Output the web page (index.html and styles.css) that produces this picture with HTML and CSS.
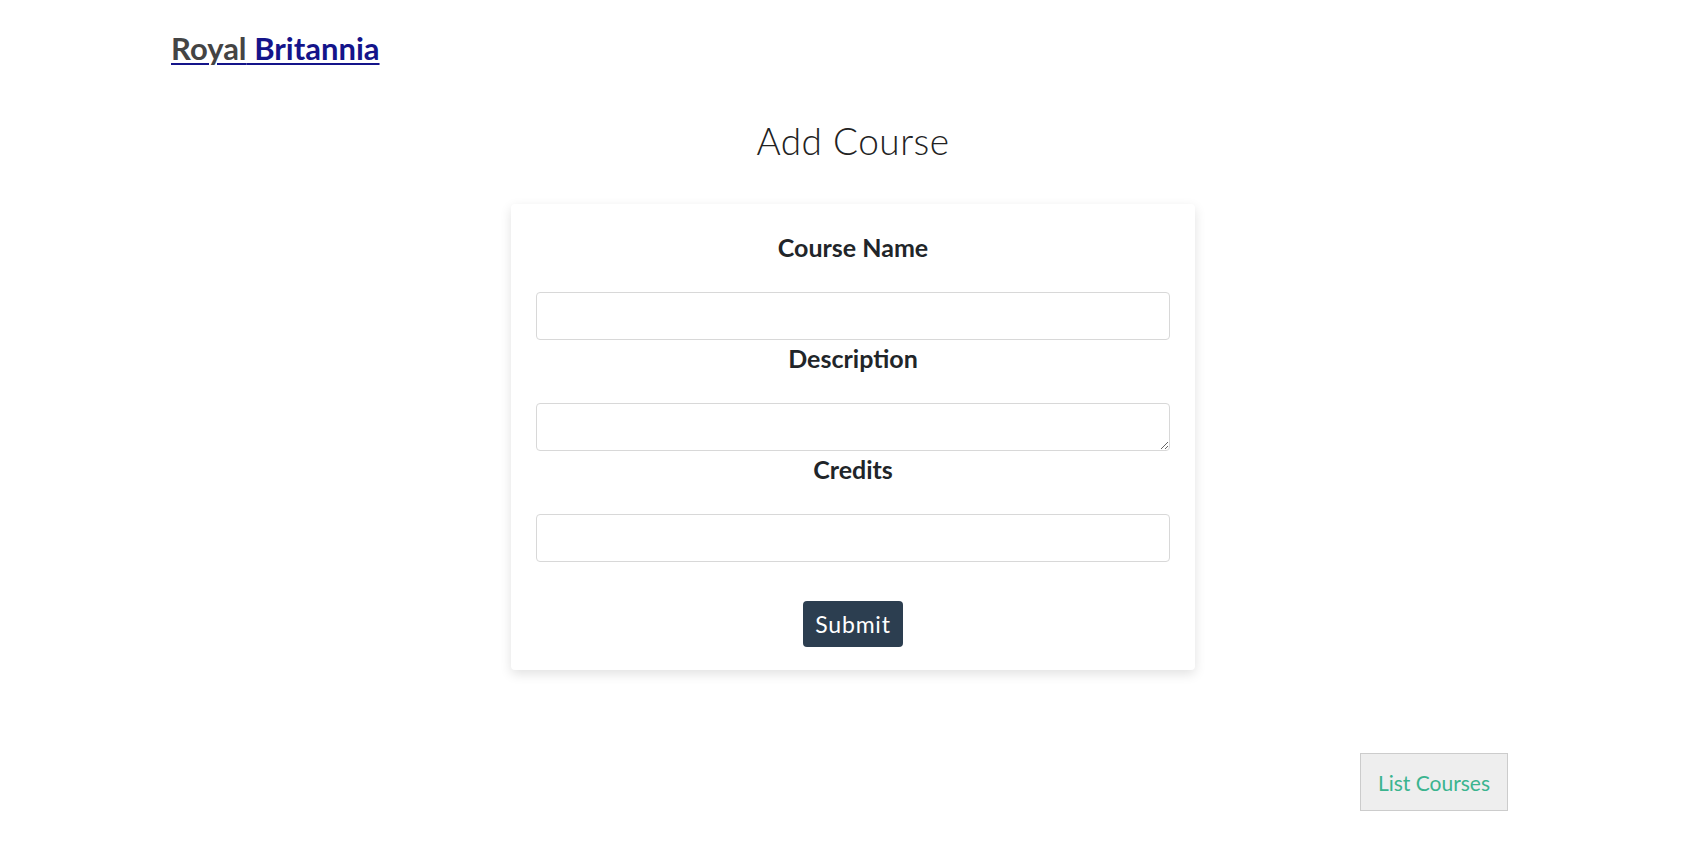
FILE: index.html
```html
<!DOCTYPE html>
<html>
<head>
<meta charset="utf-8">
<title>Add Course</title>
<link rel="stylesheet" href="styles.css">
</head>
<body>
<header class="site-header">
  <a class="brand" href="#"><span class="brand-royal">Royal</span> Britannia</a>
</header>
<main class="page">
  <h1 class="page-title">Add Course</h1>
  <form class="card">
    <label class="field-label" for="name">Course Name</label>
    <input class="field-input" id="name" type="text">
    <label class="field-label" for="desc">Description</label>
    <textarea class="field-input field-textarea" id="desc"></textarea>
    <label class="field-label" for="credits">Credits</label>
    <input class="field-input" id="credits" type="text">
    <div class="actions">
      <button class="btn-submit" type="button">Submit</button>
    </div>
  </form>
  <div class="footer-actions">
    <a class="btn-list" href="#">List Courses</a>
  </div>
</main>
</body>
</html>
```
FILE: styles.css
```css
html, body {
  margin: 0;
  padding: 0;
  background: #ffffff;
}
body {
  font-family: "Lato", "Liberation Sans", sans-serif;
  color: #212529;
}
.site-header {
  padding: 30px 0 0 171px;
}
.brand {
  font-size: 31px;
  line-height: 36px;
  font-weight: 700;
  color: #14148a;
  text-decoration: underline;
  text-decoration-thickness: 2px;
  text-underline-offset: 3px;
}
.brand-royal {
  color: #444444;
}
.page {
  display: flex;
  flex-direction: column;
  align-items: center;
  padding-left: 6px;
}
.page-title {
  margin: 53px 0 0;
  font-family: "Lato", sans-serif;
  font-weight: 300;
  font-size: 37px;
  line-height: 44px;
  letter-spacing: 0.5px;
  color: #222222;
  text-align: center;
}
.card {
  box-sizing: border-box;
  width: 684px;
  margin-top: 41px;
  padding: 29px 25px 23px;
  background: #fff;
  border-radius: 4px;
  box-shadow: 0 4px 12px rgba(0, 0, 0, 0.12);
  display: flex;
  flex-direction: column;
}
.field-label {
  display: block;
  text-align: center;
  font-size: 25px;
  line-height: 29px;
  font-weight: 700;
  color: #212529;
  margin: 0 0 30px;
}
.field-input {
  box-sizing: border-box;
  display: block;
  width: 100%;
  height: 48px;
  margin: 0 0 4px;
  padding: 6px 12px;
  border: 1px solid #d8d8d8;
  border-radius: 4px;
  font-family: inherit;
  font-size: 16px;
  background: #fff;
}
.field-textarea {
  resize: vertical;
}
.actions {
  display: flex;
  justify-content: center;
  margin-top: 35px;
}
.btn-submit {
  height: 46px;
  padding: 0 12px;
  border: none;
  border-radius: 4px;
  background: #2c3e50;
  color: #fff;
  font-family: inherit;
  font-size: 23px;
  letter-spacing: 0.8px;
}
.footer-actions {
  align-self: stretch;
  display: flex;
  justify-content: flex-end;
  padding-right: 192px;
  margin-top: 83px;
}
.btn-list {
  box-sizing: border-box;
  display: flex;
  align-items: center;
  justify-content: center;
  width: 148px;
  height: 58px;
  background: #eeeeee;
  border: 1px solid #cccccc;
  color: #3bb48e;
  font-size: 21px;
  text-decoration: none;
}
```
